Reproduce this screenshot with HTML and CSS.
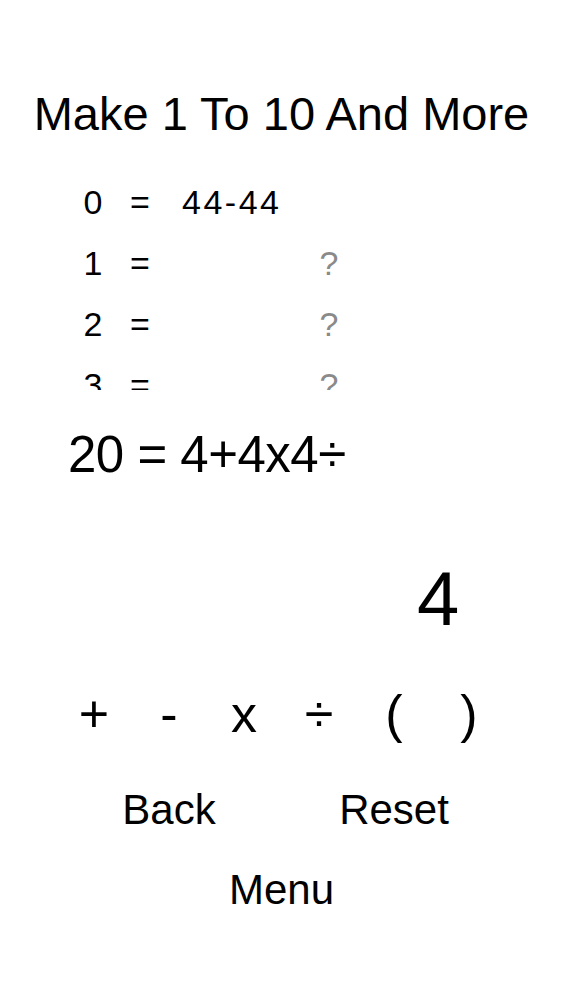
FILE: index.html
```html
<!DOCTYPE html>
<html lang="en">
<head>
<meta charset="utf-8">
<title>Make 1 To 10 And More</title>
<link rel="stylesheet" href="styles.css">
</head>
<body>
<main class="screen">
  <h1 class="title">Make 1 To 10 And More</h1>
  <div class="list">
    <div class="row"><span class="num">0</span><span class="eq">=</span><span class="expr">44-44</span></div>
    <div class="row"><span class="num">1</span><span class="eq">=</span><span class="expr pending">?</span></div>
    <div class="row"><span class="num">2</span><span class="eq">=</span><span class="expr pending">?</span></div>
    <div class="row"><span class="num">3</span><span class="eq">=</span><span class="expr pending">?</span></div>
  </div>
  <div class="equation">20 = 4+4x4÷</div>
  <div class="digit">4</div>
  <div class="ops">
    <button class="key">+</button>
    <button class="key">-</button>
    <button class="key">x</button>
    <button class="key">÷</button>
    <button class="key">(</button>
    <button class="key">)</button>
  </div>
  <div class="actions">
    <button class="action">Back</button>
    <button class="action">Reset</button>
  </div>
  <div class="menu-row">
    <button class="action">Menu</button>
  </div>
</main>
</body>
</html>
```

FILE: styles.css
```css
html, body {
  margin: 0;
  padding: 0;
  background: #ffffff;
}

body {
  font-family: "Liberation Sans", Arial, sans-serif;
  color: #000000;
}

.screen {
  width: 563px;
  height: 1000px;
  display: flex;
  flex-direction: column;
  padding-top: 84px;
  box-sizing: border-box;
}

.title {
  margin: 0;
  font-size: 47px;
  font-weight: 400;
  line-height: 60px;
  height: 60px;
  text-align: center;
}

.list {
  margin-top: 28px;
  height: 218px;
  overflow: hidden;
  padding-left: 78px;
}

.row {
  display: flex;
  align-items: center;
  height: 61px;
  font-size: 34px;
  line-height: 61px;
}

.num {
  width: 30px;
  text-align: center;
}

.eq {
  width: 30px;
  margin-left: 17px;
  text-align: center;
}

.expr {
  width: 294px;
  margin-left: 27px;
  letter-spacing: 2.5px;
}

.expr.pending {
  text-align: center;
  color: #8a8a8a;
  letter-spacing: 0;
}

.equation {
  margin-top: 35px;
  height: 60px;
  line-height: 60px;
  font-size: 51px;
  padding-left: 68px;
  letter-spacing: -0.5px;
}

.digit {
  margin-top: 69px;
  height: 90px;
  line-height: 90px;
  font-size: 76px;
  padding-left: 417px;
}

.ops {
  margin: 35px auto 0;
  width: 450px;
  display: grid;
  grid-template-columns: repeat(6, 75px);
  height: 70px;
}

button {
  font: inherit;
  color: inherit;
  background: none;
  border: 0;
  padding: 0;
  margin: 0;
}

.key {
  font-size: 52px;
  line-height: 70px;
  height: 70px;
  text-align: center;
}

.actions {
  margin: 33px auto 0;
  width: 450px;
  display: grid;
  grid-template-columns: repeat(2, 225px);
  height: 56px;
}

.action {
  font-size: 42px;
  line-height: 56px;
  height: 56px;
  text-align: center;
}

.menu-row {
  margin-top: 24px;
  display: flex;
  justify-content: center;
  height: 56px;
}
```
